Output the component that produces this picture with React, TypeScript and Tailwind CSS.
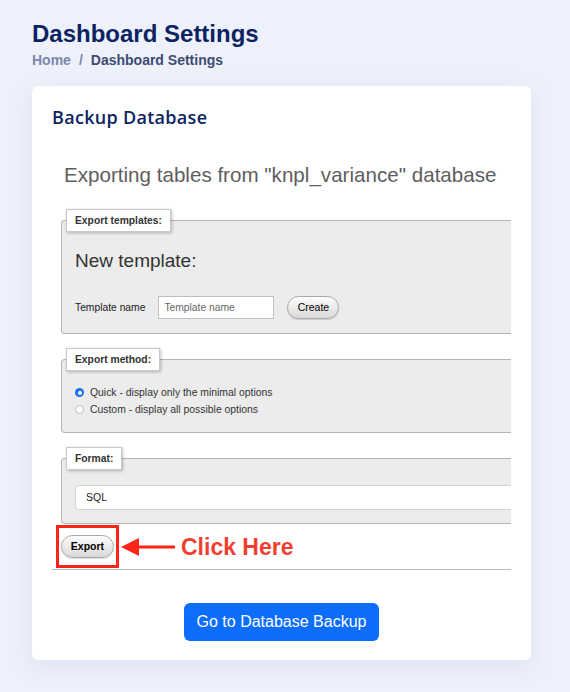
const Legend = ({ label }: { label: string }) => (
  <div className="-mt-[12px] ml-[4px] block w-fit border border-[#c9c9c9] bg-white px-[8px] py-[4px] text-[10.3px] font-bold leading-[13px] text-[#333] shadow-[1px_1px_3px_rgba(0,0,0,0.25)]">
    {label}
  </div>
)

const Fieldset = ({ label, className, children }: { label: string; className: string; children: React.ReactNode }) => (
  <div className={`w-[470px] rounded-l-[4px] border border-r-0 border-[#b5b5b5] bg-[#ececec] ${className}`}>
    <Legend label={label} />
    {children}
  </div>
)

const PillButton = ({ label, className }: { label: string; className: string }) => (
  <button
    type="button"
    className={`h-[23px] rounded-full border border-[#a9a9a9] bg-gradient-to-b from-[#fdfdfd] to-[#d9d9d9] text-[10.5px] text-black shadow-[0_1px_1px_rgba(0,0,0,0.15)] ${className}`}
  >
    {label}
  </button>
)

const App = () => {
  return (
    <div className="min-h-[692px] bg-[#eef1fb] px-8 pt-[20px] pb-8 font-['Liberation_Sans',Arial,sans-serif]">
      <h1 className="text-[24px] font-bold leading-[28px] text-[#0b2461]">Dashboard Settings</h1>
      <div className="mt-[3px] flex items-center gap-[8px] text-[14px] font-bold leading-[18px]">
        <span className="text-[#7b87a8]">Home</span>
        <span className="text-[#7b87a8]">/</span>
        <span className="text-[#3c4c72]">Dashboard Settings</span>
      </div>

      <div className="mt-[17px] w-[499px] rounded-[6px] bg-white px-5 pt-[19px] pb-[19px] shadow-[0_6px_24px_rgba(80,100,170,0.10)]">
        <h2 className="font-['Open_Sans',sans-serif] text-[18px] font-semibold leading-[24px] tracking-[0.3px] text-[#0b2461]">
          Backup Database
        </h2>

        <div className="mt-[16px] overflow-hidden border-b border-[#bdbdbd] pb-[1px]">
          <p className="pl-[12px] pt-[18px] text-[20.6px] leading-[24px] text-[#5e5e5e]">
            Exporting tables from "knpl_variance" database
          </p>

          <div className="pl-[9px]">
            <Fieldset label="Export templates:" className="mt-[33px] h-[114px]">
              <p className="mt-[18px] pl-[13px] text-[19px] leading-[22px] text-[#333]">New template:</p>
              <div className="mt-[24px] flex items-center pl-[13px]">
                <span className="text-[10.3px] text-[#222]">Template name</span>
                <div className="ml-[13px] flex h-[23px] w-[116px] items-center border border-[#bfbfbf] bg-white pl-[5px] text-[10.3px] text-[#666]">
                  Template name
                </div>
                <PillButton label="Create" className="ml-[13px] w-[52px]" />
              </div>
            </Fieldset>

            <Fieldset label="Export method:" className="mt-[25px] h-[74px]">
              <div className="mt-[15px] flex flex-col gap-[4px] pl-[13px] text-[10.4px] leading-[13px] text-[#333]">
                <label className="flex items-center gap-[6px]">
                  <span className="flex h-[9px] w-[9px] items-center justify-center rounded-full bg-[#1a73e8]">
                    <span className="h-[4px] w-[4px] rounded-full bg-white" />
                  </span>
                  Quick - display only the minimal options
                </label>
                <label className="flex items-center gap-[6px]">
                  <span className="h-[9px] w-[9px] rounded-full border border-[#bcbcbc] bg-white" />
                  Custom - display all possible options
                </label>
              </div>
            </Fieldset>

            <Fieldset label="Format:" className="mt-[25px] h-[66px]">
              <div className="ml-[13px] mt-[15px] flex h-[25px] items-center rounded-l-[4px] border border-r-0 border-[#d4d4d4] bg-white pl-[10px] text-[10.5px] text-[#222]">
                SQL
              </div>
            </Fieldset>
          </div>

          <div className="mt-[1px] flex items-center pl-[4px]">
            <div className="flex h-[43px] w-[63px] items-center justify-center border-[3px] border-[#ff2418]">
              <PillButton label="Export" className="w-[53px] font-bold" />
            </div>
            <svg width="56" height="20" viewBox="0 0 56 20" className="ml-[2px]">
              <polygon points="0,10 18,1 18,19" fill="#ff2418" />
              <rect x="16" y="8.5" width="38" height="3" fill="#ff2418" />
            </svg>
            <span className="ml-[4px] text-[23px] font-bold leading-[26px] text-[#f23e30]">Click Here</span>
          </div>
        </div>

        <div className="mt-[33px] flex justify-center">
          <button
            type="button"
            className="h-[38px] w-[195px] rounded-[6px] bg-[#0d6efd] text-[16px] text-white"
          >
            Go to Database Backup
          </button>
        </div>
      </div>
    </div>
  )
}

export default App
